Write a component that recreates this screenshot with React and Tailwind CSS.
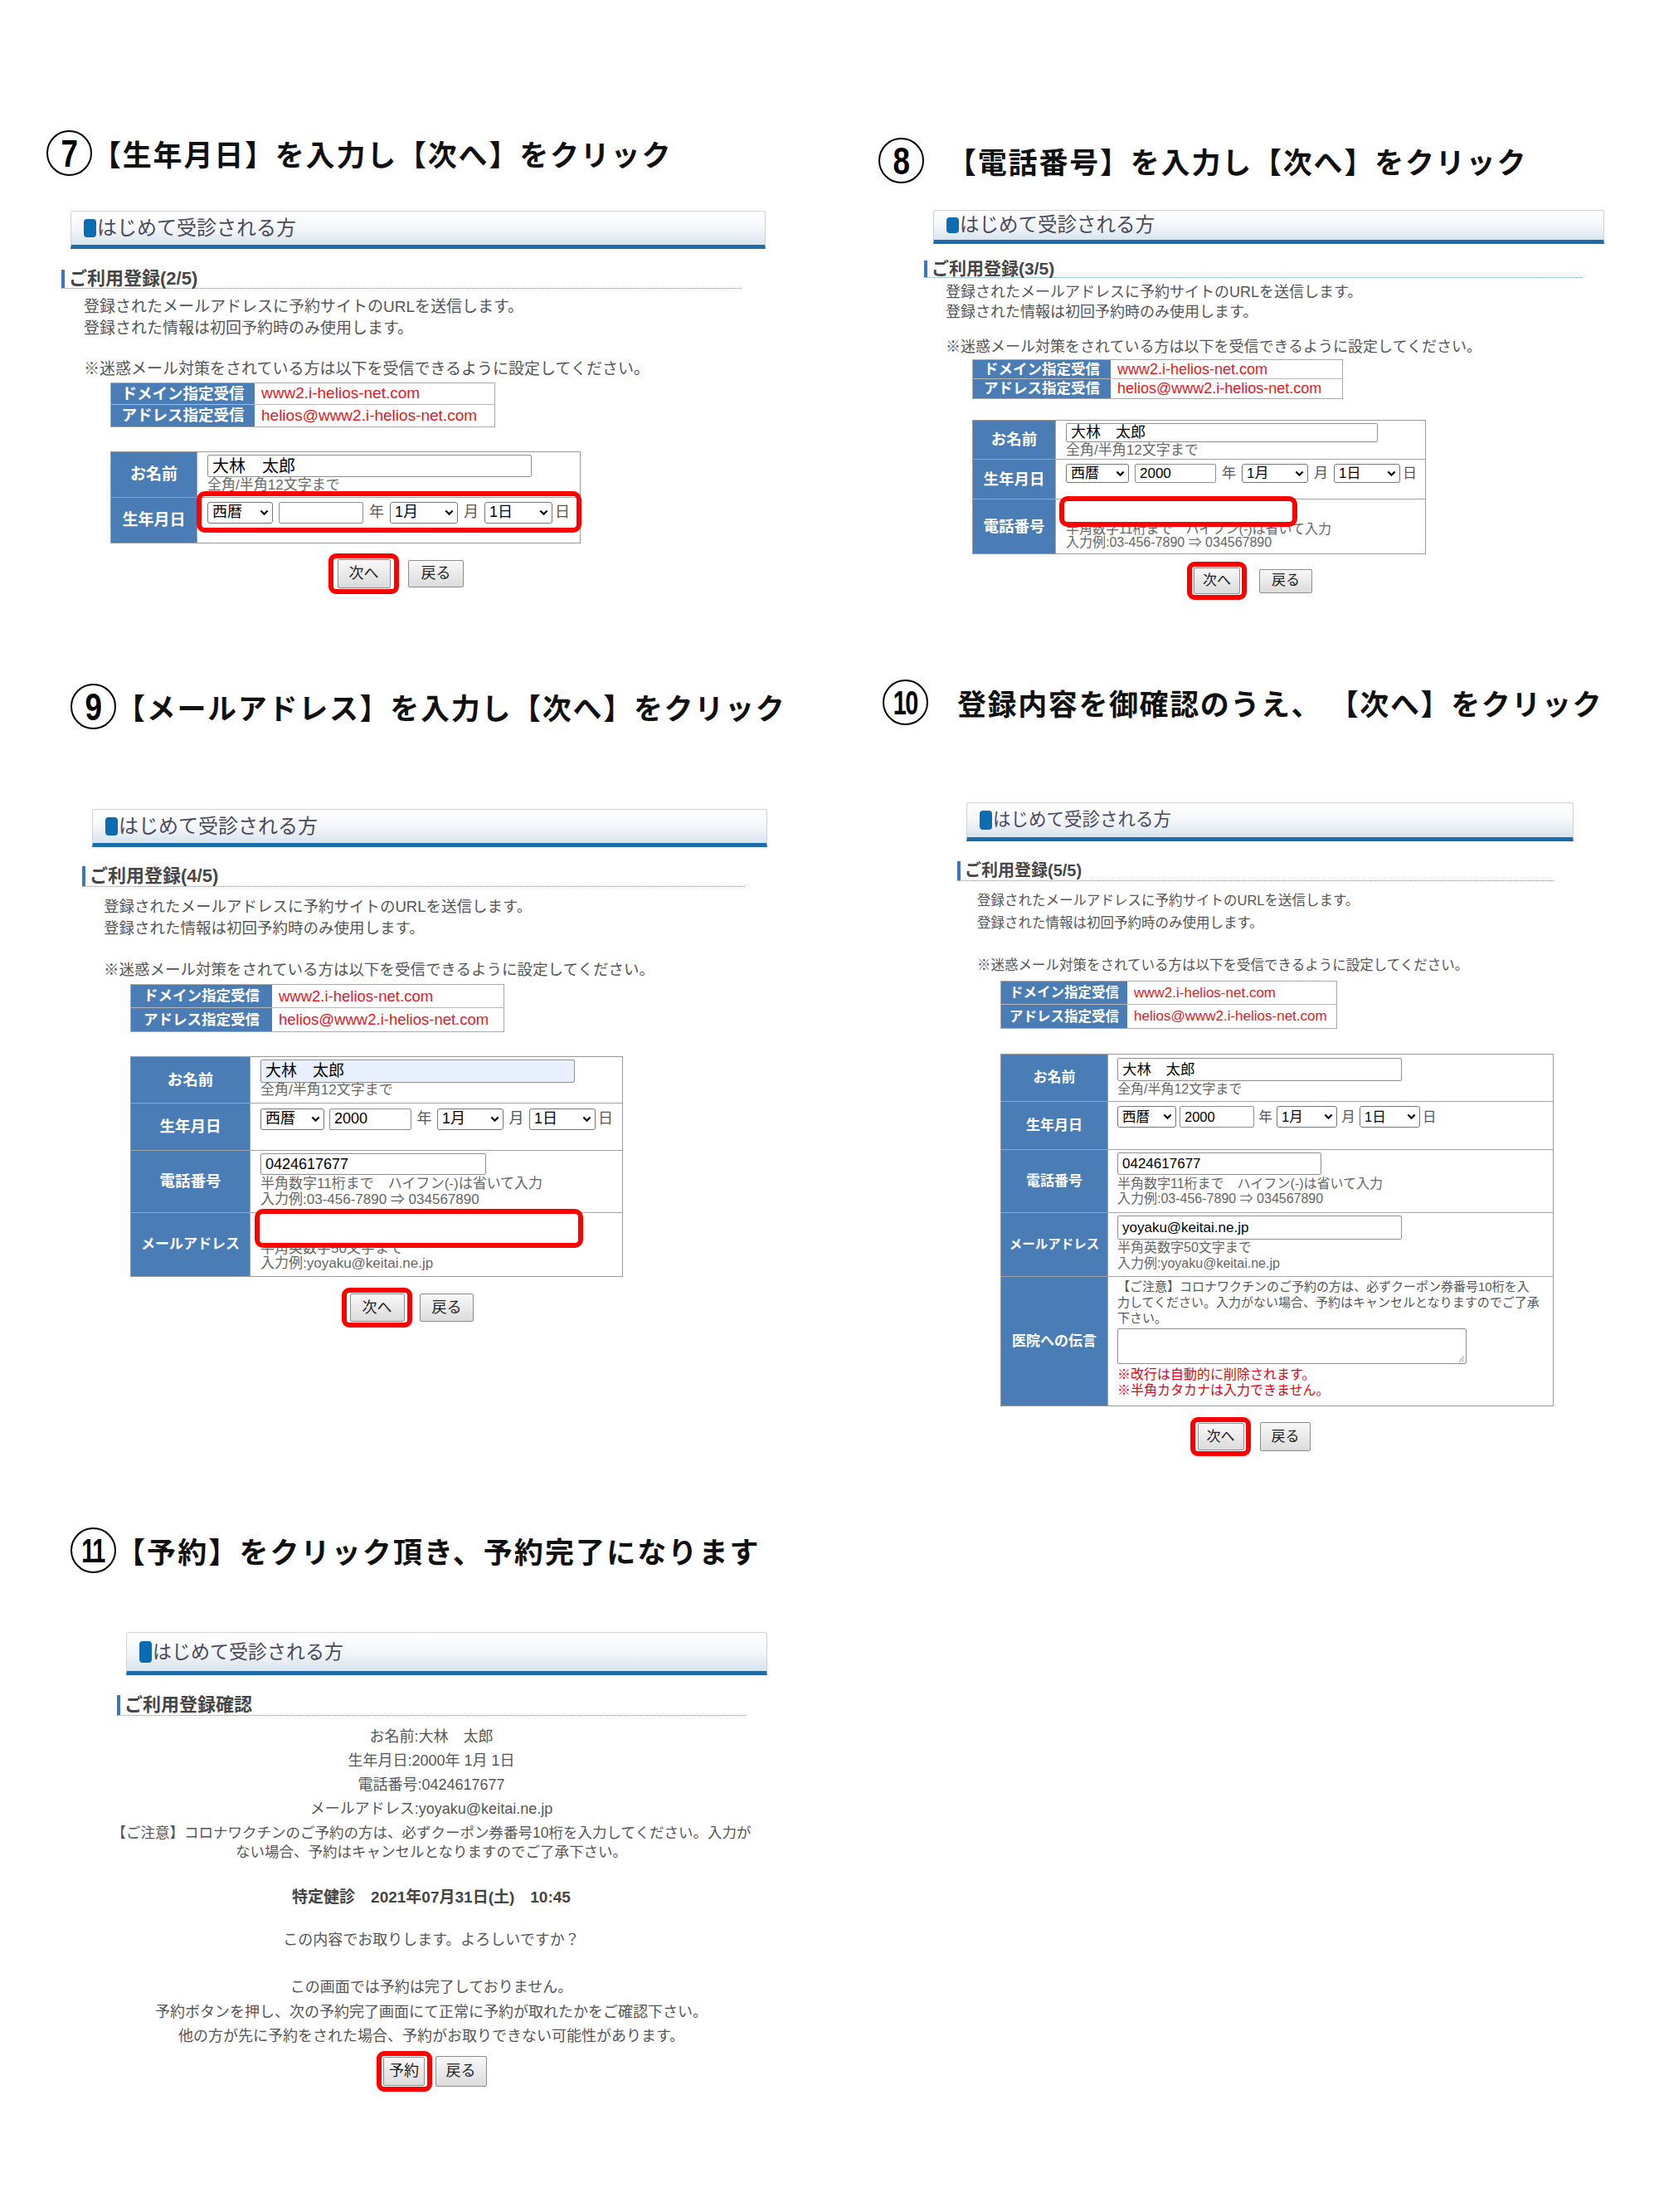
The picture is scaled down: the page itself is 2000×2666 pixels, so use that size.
import React from "react";

const RED_BOX = "absolute border-[6px] border-[#ff0000] rounded-[10px] pointer-events-none";

function Title({ className, num, numClass, text, textClass }) {
  return (
    <div className={"flex items-center " + className}>
      <div className="w-[55px] h-[55px] rounded-full border-[2px] border-black flex items-center justify-center shrink-0 overflow-hidden">
        <span className={"font-['Liberation_Sans',sans-serif] font-bold leading-none text-black " + numClass}>{num}</span>
      </div>
      <div className={"font-['Noto_Sans_CJK_JP',sans-serif] font-bold text-[#111] whitespace-pre leading-none " + textClass}>
        {text}
      </div>
    </div>
  );
}

function Header({ className, textClass }) {
  return (
    <div
      className={
        "flex items-center border border-[#d2d2d2] border-b-[5px] border-b-[#1d6ca9] rounded-t-[3px] bg-linear-to-b from-white via-[#f4f7fa] to-[#d8e4ee] " +
        className
      }
    >
      <span className="ml-[15px] w-[15px] h-[55%] rounded-[4px] bg-[#0c6cb2] shrink-0" />
      <span className={"ml-[1px] text-[#4b4a5a] whitespace-nowrap " + textClass}>はじめて受診される方</span>
    </div>
  );
}

function Heading({ className, textClass, children }) {
  return (
    <div className={"flex items-stretch border-b border-dotted border-[#6d9bcc] " + className}>
      <span className="w-[4px] bg-[#3a78bb] shrink-0" />
      <span className={"pl-[5px] font-bold text-[#464646] whitespace-nowrap " + textClass}>{children}</span>
    </div>
  );
}

function Body({ className, gap }) {
  return (
    <div className={"text-[#555] whitespace-nowrap " + className}>
      <p>登録されたメールアドレスに予約サイトのURLを送信します。</p>
      <p>登録された情報は初回予約時のみ使用します。</p>
      <p className={gap}>※迷惑メール対策をされている方は以下を受信できるように設定してください。</p>
    </div>
  );
}

function DomainTable({ className, rowClass, labelClass, valueClass }) {
  const rows = [
    ["ドメイン指定受信", "www2.i-helios-net.com"],
    ["アドレス指定受信", "helios@www2.i-helios-net.com"],
  ];
  return (
    <div className={"border border-[#a9a9a9] " + className}>
      {rows.map(([label, value], i) => (
        <div key={label} className={"flex " + rowClass + (i === 0 ? " border-b border-[#b8b8b8]" : "")}>
          <div className={"bg-[#4a7db5] text-white font-bold flex items-center justify-center shrink-0 whitespace-nowrap " + labelClass}>
            {label}
          </div>
          <div className={"flex items-center text-[#e5181e] pl-[8px] whitespace-nowrap " + valueClass}>{value}</div>
        </div>
      ))}
    </div>
  );
}

function Row({ label, className, labelClass, contentClass, last, children }) {
  return (
    <div className={"flex " + (last ? "" : "border-b border-[#a3a3a3] ") + className}>
      <div className={"bg-[#4a7db5] text-white font-bold flex items-center justify-center shrink-0 border-r border-[#a3a3a3] whitespace-nowrap " + labelClass}>
        {label}
      </div>
      <div className={"flex-1 flex flex-col items-start " + contentClass}>{children}</div>
    </div>
  );
}

function Field({ className, children }) {
  return (
    <div className={"border border-[#8f8f8f] rounded-[2px] bg-white flex items-center pl-[5px] text-black whitespace-nowrap " + className}>
      {children}
    </div>
  );
}

function Sel({ className, children }) {
  return (
    <div className={"border border-[#767676] rounded-[3px] bg-white flex items-center justify-between pl-[5px] pr-[4px] text-black " + className}>
      <span>{children}</span>
      <svg viewBox="0 0 10 7" className="w-[11px] h-[8px]">
        <path d="M1.2 1.2 5 5 8.8 1.2" fill="none" stroke="#111" strokeWidth="2" />
      </svg>
    </div>
  );
}

function DateRow({ h, fs, w1, w2, w3, gap, unit, year }) {
  return (
    <div className={"flex items-center " + fs}>
      <Sel className={h + " " + w1}>西暦</Sel>
      <Field className={h + " " + w2 + " " + gap}>{year}</Field>
      <span className={"text-center text-[#555] " + unit}>年</span>
      <Sel className={h + " " + w3}>1月</Sel>
      <span className={"text-center text-[#555] " + unit}>月</span>
      <Sel className={h + " " + w3}>1日</Sel>
      <span className="ml-[3px] text-[#555]">日</span>
    </div>
  );
}

function Btn({ className, children }) {
  return (
    <div className={"border border-[#8d8d8d] rounded-[2px] bg-linear-to-b from-[#f8f8f8] to-[#dcdcdc] text-[#222] flex items-center justify-center whitespace-nowrap " + className}>
      {children}
    </div>
  );
}

function RedBtn({ className, btnClass, children }) {
  return (
    <div className={"border-[6px] border-[#ff0000] rounded-[9px] flex items-center justify-center " + className}>
      <Btn className={btnClass}>{children}</Btn>
    </div>
  );
}

function Hint({ className, children }) {
  return <div className={"text-[#666] whitespace-nowrap " + className}>{children}</div>;
}

function Step7() {
  return (
    <div>
      <Title className="ml-[56px] mt-[157px]" num="7" numClass="text-[46px] scale-x-[0.8]" text="【生年月日】を入力し【次へ】をクリック" textClass="text-[35px] tracking-[1.8px]" />
      <div className="ml-[74px] mt-[42px] flex flex-col items-start">
        <Header className="ml-[11px] w-[838px] h-[46px]" textClass="text-[24px]" />
        <Heading className="mt-[25px] w-[820px] h-[23px]" textClass="text-[22px] leading-[22px]">ご利用登録(2/5)</Heading>
        <Body className="ml-[27px] mt-[9px] text-[19px] leading-[26px]" gap="mt-[23px]" />
        <DomainTable className="ml-[59px] mt-[3px] w-[464px]" rowClass="h-[26px]" labelClass="w-[173px] text-[18.5px]" valueClass="text-[19px]" />
        <div className="relative ml-[59px] mt-[29px] w-[567px] border border-[#9a9a9a]">
          <Row label="お名前" className="h-[55px]" labelClass="w-[104px] text-[19px]" contentClass="pl-[12px] pt-[3px]">
            <Field className="w-[391px] h-[27px] text-[20px]">大林　太郎</Field>
            <Hint className="text-[17px] leading-[18px] mt-[1px]">全角/半角12文字まで</Hint>
          </Row>
          <Row label="生年月日" className="h-[54px]" labelClass="w-[104px] text-[19px]" contentClass="pl-[12px] pt-[4px]" last>
            <DateRow h="h-[26px]" fs="text-[18px]" w1="w-[79px]" w2="w-[102px]" w3="w-[82px]" gap="ml-[7px]" unit="w-[32px]" year="" />
          </Row>
          <div className={RED_BOX + " left-[103px] top-[47px] w-[464px] h-[50px]"} />
        </div>
        <div className="ml-[322px] mt-[12px] flex items-center gap-[11px]">
          <RedBtn className="w-[85px] h-[49px]" btnClass="w-[64px] h-[35px] text-[18px]">次へ</RedBtn>
          <Btn className="w-[67px] h-[33px] text-[18px]">戻る</Btn>
        </div>
      </div>
    </div>
  );
}

function Step8() {
  return (
    <div>
      <Title className="ml-[59px] mt-[166px]" num="8" numClass="text-[46px] scale-x-[0.8]" text="【電話番号】を入力し【次へ】をクリック" textClass="ml-[28px] text-[35px] tracking-[1.8px]" />
      <div className="ml-[114px] mt-[32px] flex flex-col items-start">
        <Header className="ml-[11px] w-[809px] h-[41px]" textClass="text-[23.5px]" />
        <Heading className="mt-[20px] w-[793px] h-[21px]" textClass="text-[21px] leading-[20px]">ご利用登録(3/5)</Heading>
        <Body className="ml-[26px] mt-[5px] text-[18px] leading-[24px]" gap="mt-[18px]" />
        <DomainTable className="ml-[58px] mt-[3px] w-[447px]" rowClass="h-[23px]" labelClass="w-[166px] text-[17.5px]" valueClass="text-[18px]" />
        <div className="relative ml-[58px] mt-[25px] w-[547px] border border-[#9a9a9a]">
          <Row label="お名前" className="h-[47px]" labelClass="w-[100px] text-[18.5px]" contentClass="pl-[12px] pt-[3px]">
            <Field className="w-[376px] h-[23px] text-[18px]">大林　太郎</Field>
            <Hint className="text-[17px] leading-[16px] mt-[2px]">全角/半角12文字まで</Hint>
          </Row>
          <Row label="生年月日" className="h-[48px]" labelClass="w-[100px] text-[18.5px]" contentClass="pl-[12px] pt-[4px]">
            <DateRow h="h-[23px]" fs="text-[17px]" w1="w-[76px]" w2="w-[98px]" w3="w-[80px]" gap="ml-[7px]" unit="w-[31px]" year="2000" />
          </Row>
          <Row label="電話番号" className="h-[65px]" labelClass="w-[100px] text-[18.5px]" contentClass="pl-[12px] pt-[3px]" last>
            <Field className="w-[275px] h-[23px] text-[17px]"></Field>
            <Hint className="text-[16px] leading-[16px] mt-[2px]">半角数字11桁まで　ハイフン(-)は省いて入力</Hint>
            <Hint className="text-[16px] leading-[16px]">入力例:03-456-7890 ⇒ 034567890</Hint>
          </Row>
          <div className={RED_BOX + " left-[104px] top-[91px] w-[287px] h-[37px] bg-white"} />
        </div>
        <div className="ml-[317px] mt-[9px] flex items-center gap-[15px]">
          <RedBtn className="w-[72px] h-[46px]" btnClass="w-[56px] h-[32px] text-[17px]">次へ</RedBtn>
          <Btn className="w-[64px] h-[29px] text-[17px]">戻る</Btn>
        </div>
      </div>
    </div>
  );
}

function Step9() {
  return (
    <div>
      <Title className="ml-[85px] mt-[24px]" num="9" numClass="text-[46px] scale-x-[0.8]" text="【メールアドレス】を入力し【次へ】をクリック" textClass="text-[35px] tracking-[1.7px]" />
      <div className="ml-[99px] mt-[96px] flex flex-col items-start">
        <Header className="ml-[12px] w-[814px] h-[46px]" textClass="text-[24px]" />
        <Heading className="mt-[23px] w-[799px] h-[25px]" textClass="text-[22px] leading-[24px]">ご利用登録(4/5)</Heading>
        <Body className="ml-[26px] mt-[11px] text-[18.5px] leading-[26px]" gap="mt-[24px]" />
        <DomainTable className="ml-[58px] mt-[4px] w-[451px]" rowClass="h-[28px]" labelClass="w-[170px] text-[17.5px]" valueClass="text-[18.5px]" />
        <div className="relative ml-[58px] mt-[29px] w-[594px] border border-[#9a9a9a]">
          <Row label="お名前" className="h-[56px]" labelClass="w-[144px] text-[18.5px]" contentClass="pl-[12px] pt-[3px]">
            <Field className="w-[379px] h-[28px] text-[19px] bg-[#e8f0fe]!">大林　太郎</Field>
            <Hint className="text-[17px] leading-[18px]">全角/半角12文字まで</Hint>
          </Row>
          <Row label="生年月日" className="h-[57px]" labelClass="w-[144px] text-[18.5px]" contentClass="pl-[12px] pt-[5px]">
            <DateRow h="h-[26px]" fs="text-[18px]" w1="w-[77px]" w2="w-[99px]" w3="w-[80px]" gap="ml-[6px]" unit="w-[31px]" year="2000" />
          </Row>
          <Row label="電話番号" className="h-[75px]" labelClass="w-[144px] text-[18.5px]" contentClass="pl-[12px] pt-[3px]">
            <Field className="w-[272px] h-[26px] text-[18px]">0424617677</Field>
            <Hint className="text-[17px] leading-[20px] mt-[1px]">半角数字11桁まで　ハイフン(-)は省いて入力</Hint>
            <Hint className="text-[17px] leading-[18px]">入力例:03-456-7890 ⇒ 034567890</Hint>
          </Row>
          <Row label="メールアドレス" className="h-[76px]" labelClass="w-[144px] text-[17px]" contentClass="pl-[12px] pt-[4px]" last>
            <Field className="w-[379px] h-[28px] text-[18px]"></Field>
            <Hint className="text-[17px] leading-[18px] mt-[2px]">半角英数字50文字まで</Hint>
            <Hint className="text-[17px] leading-[18px]">入力例:yoyaku@keitai.ne.jp</Hint>
          </Row>
          <div className={RED_BOX + " left-[149px] top-[183px] w-[396px] h-[47px] bg-white"} />
        </div>
        <div className="ml-[313px] mt-[13px] flex items-center gap-[9px]">
          <RedBtn className="w-[85px] h-[48px]" btnClass="w-[66px] h-[34px] text-[18px]">次へ</RedBtn>
          <Btn className="w-[65px] h-[34px] text-[18px]">戻る</Btn>
        </div>
      </div>
    </div>
  );
}

function Step10() {
  return (
    <div>
      <Title className="ml-[64px] mt-[19px]" num="10" numClass="text-[40px] scale-x-[0.72] tracking-[-2px]" text="登録内容を御確認のうえ、 【次へ】をクリック" textClass="ml-[35px] text-[35px] tracking-[1.6px]" />
      <div className="ml-[154px] mt-[93px] flex flex-col items-start">
        <Header className="ml-[11px] w-[732px] h-[47px]" textClass="text-[21.5px]" />
        <Heading className="mt-[24px] w-[719px] h-[24px]" textClass="text-[20px] leading-[23px]">ご利用登録(5/5)</Heading>
        <Body className="ml-[24px] mt-[10px] text-[16.5px] leading-[27px]" gap="mt-[24px]" />
        <DomainTable className="ml-[52px] mt-[5px] w-[406px]" rowClass="h-[28px]" labelClass="w-[152px] text-[16.5px]" valueClass="text-[17px]" />
        <div className="ml-[52px] mt-[30px] w-[667px] border border-[#9a9a9a]">
          <Row label="お名前" className="h-[57px]" labelClass="w-[129px] text-[17px]" contentClass="pl-[11px] pt-[4px]">
            <Field className="w-[343px] h-[28px] text-[17.5px]">大林　太郎</Field>
            <Hint className="text-[16px] leading-[18px] mt-[1px]">全角/半角12文字まで</Hint>
          </Row>
          <Row label="生年月日" className="h-[58px]" labelClass="w-[129px] text-[17px]" contentClass="pl-[11px] pt-[5px]">
            <DateRow h="h-[26px]" fs="text-[16.5px]" w1="w-[71px]" w2="w-[90px]" w3="w-[73px]" gap="ml-[4px]" unit="w-[27px]" year="2000" />
          </Row>
          <Row label="電話番号" className="h-[76px]" labelClass="w-[129px] text-[17px]" contentClass="pl-[11px] pt-[3px]">
            <Field className="w-[246px] h-[27px] text-[17px]">0424617677</Field>
            <Hint className="text-[16px] leading-[18px] mt-[2px]">半角数字11桁まで　ハイフン(-)は省いて入力</Hint>
            <Hint className="text-[16px] leading-[18px]">入力例:03-456-7890 ⇒ 034567890</Hint>
          </Row>
          <Row label="メールアドレス" className="h-[77px]" labelClass="w-[129px] text-[15.5px]" contentClass="pl-[11px] pt-[3px]">
            <Field className="w-[343px] h-[29px] text-[17px]">yoyaku@keitai.ne.jp</Field>
            <Hint className="text-[16px] leading-[19px]">半角英数字50文字まで</Hint>
            <Hint className="text-[16px] leading-[19px]">入力例:yoyaku@keitai.ne.jp</Hint>
          </Row>
          <Row label="医院への伝言" className="h-[155px]" labelClass="w-[129px] text-[17px]" contentClass="pl-[11px] pt-[2px]" last>
            <div className="text-[15px] leading-[19px] text-[#555] whitespace-nowrap">
              【ご注意】コロナワクチンのご予約の方は、必ずクーポン券番号10桁を入
              <br />
              力してください。入力がない場合、予約はキャンセルとなりますのでご了承
              <br />
              下さい。
            </div>
            <div className="relative mt-[3px] w-[421px] h-[43px] border border-[#8f8f8f] rounded-[2px] bg-white">
              <svg viewBox="0 0 10 10" className="absolute right-[1px] bottom-[1px] w-[10px] h-[10px]">
                <path d="M9 3 3 9M9 6.5 6.5 9" stroke="#888" strokeWidth="1" />
              </svg>
            </div>
            <div className="mt-[3px] text-[16px] leading-[19px] text-[#e60012] whitespace-nowrap">
              ※改行は自動的に削除されます。
              <br />
              ※半角カタカナは入力できません。
            </div>
          </Row>
        </div>
        <div className="ml-[281px] mt-[13px] flex items-center gap-[11px]">
          <RedBtn className="w-[73px] h-[47px]" btnClass="w-[56px] h-[33px] text-[17px]">次へ</RedBtn>
          <Btn className="w-[61px] h-[35px] text-[17px]">戻る</Btn>
        </div>
      </div>
    </div>
  );
}

function Step11() {
  return (
    <div>
      <Title className="ml-[85px] mt-[41px]" num="11" numClass="text-[40px] scale-x-[0.72] tracking-[-2px]" text="【予約】をクリック頂き、予約完了になります" textClass="text-[35px] tracking-[2.1px]" />
      <div className="ml-[141px] mt-[71px] flex flex-col items-start">
        <Header className="ml-[11px] w-[773px] h-[52px]" textClass="text-[23px]" />
        <Heading className="mt-[24px] w-[758px] h-[25px]" textClass="text-[22px] leading-[24px]">ご利用登録確認</Heading>
        <div className="w-[758px] mt-[11px] flex flex-col items-center text-center text-[#555] text-[18px] whitespace-nowrap">
          <div className="leading-[29px]">
            <p>お名前:大林　太郎</p>
            <p>生年月日:2000年 1月 1日</p>
            <p>電話番号:0424617677</p>
            <p>メールアドレス:yoyaku@keitai.ne.jp</p>
          </div>
          <p className="mt-[3px] leading-[23px] text-[17.5px]">
            【ご注意】コロナワクチンのご予約の方は、必ずクーポン券番号10桁を入力してください。入力が
            <br />
            ない場合、予約はキャンセルとなりますのでご了承下さい。
          </p>
          <p className="mt-[28px] leading-[29px] text-[19px] font-bold text-[#444]">特定健診　2021年07月31日(土)　10:45</p>
          <p className="mt-[23px] leading-[29px]">この内容でお取りします。よろしいですか？</p>
          <div className="mt-[28px] leading-[29.5px]">
            <p>この画面では予約は完了しておりません。</p>
            <p>予約ボタンを押し、次の予約完了画面にて正常に予約が取れたかをご確認下さい。</p>
            <p>他の方が先に予約をされた場合、予約がお取りできない可能性があります。</p>
          </div>
          <div className="mt-[2px] flex items-center gap-[4px]">
            <RedBtn className="w-[67px] h-[49px]" btnClass="w-[50px] h-[35px] text-[18px]">予約</RedBtn>
            <Btn className="w-[62px] h-[37px] text-[18px]">戻る</Btn>
          </div>
        </div>
      </div>
    </div>
  );
}

export default function App() {
  return (
    <div className="w-[2000px] h-[2666px] bg-white overflow-hidden grid grid-cols-[1000px_1000px] grid-rows-[800px_1000px_866px] font-['Liberation_Sans','Noto_Sans_CJK_JP',sans-serif]">
      <Step7 />
      <Step8 />
      <Step9 />
      <Step10 />
      <Step11 />
      <div />
    </div>
  );
}
